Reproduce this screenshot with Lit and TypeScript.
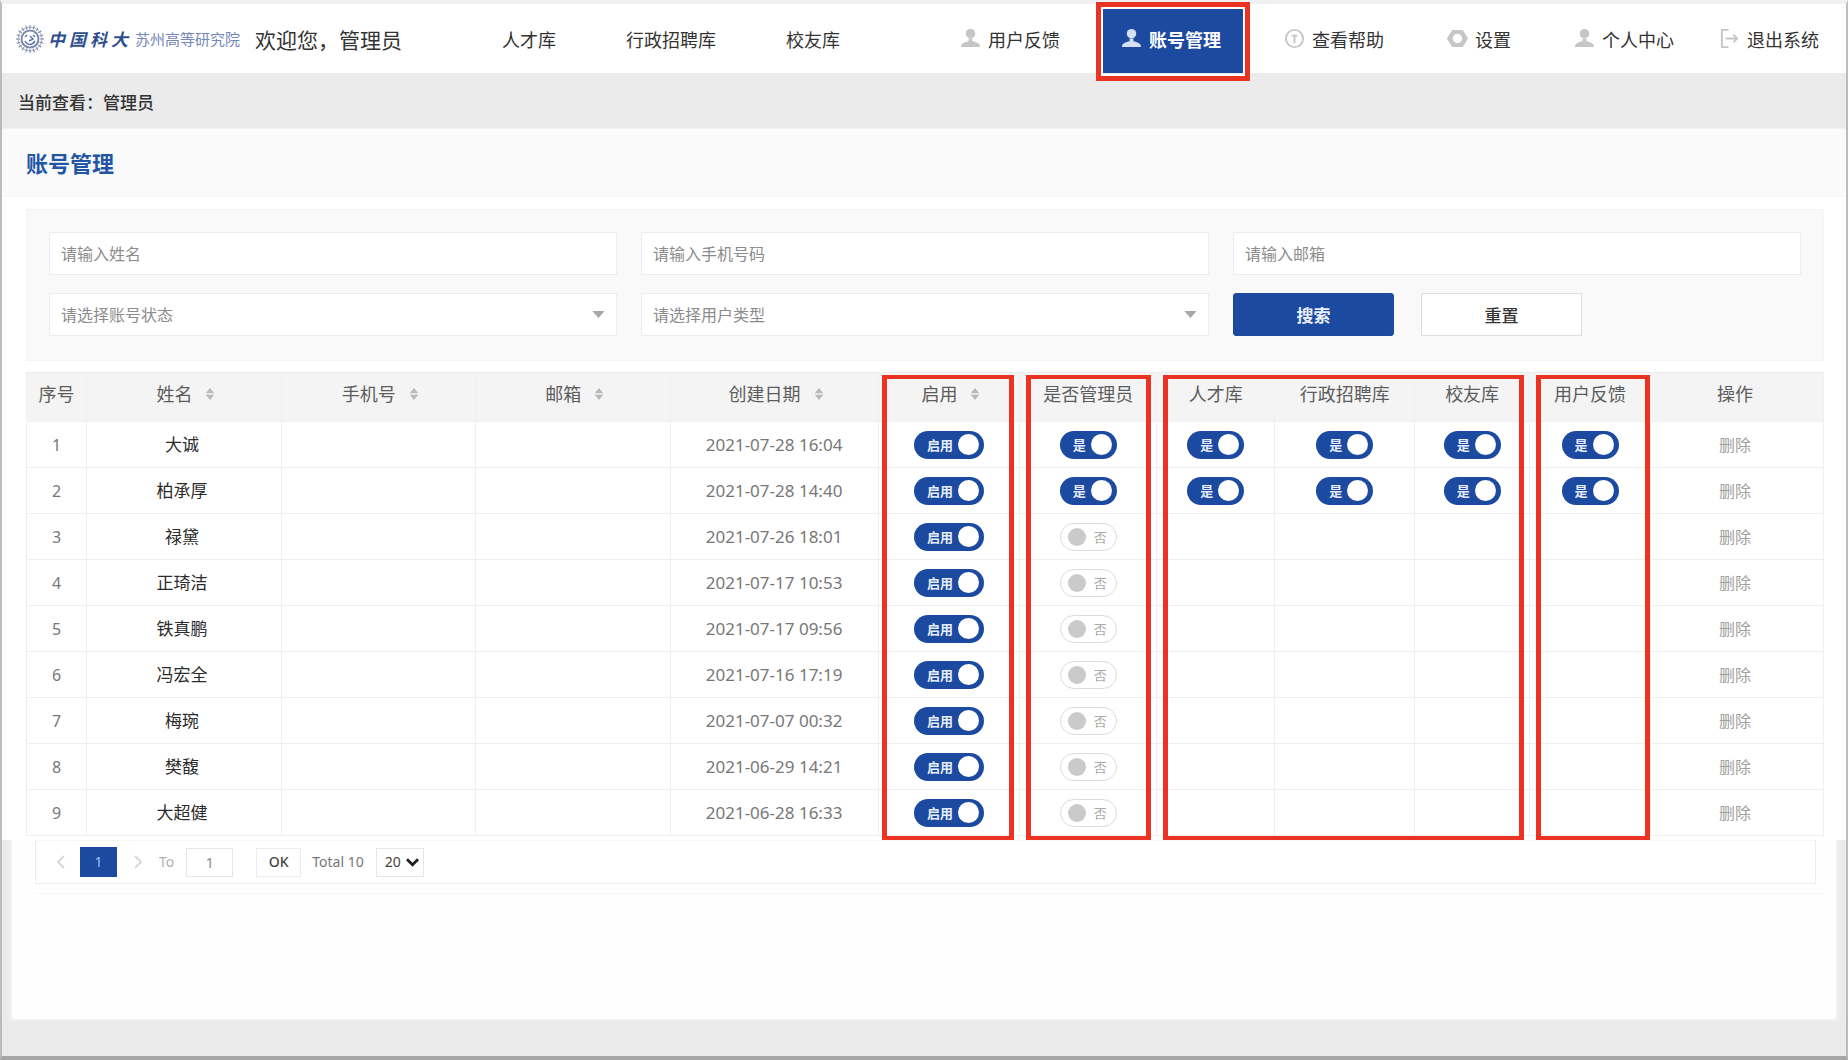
import { LitElement, html, css, svg } from "lit";
import { customElement, property } from "lit/decorators.js";
import { classMap } from "lit/directives/class-map.js";

type IconName = "user" | "help" | "gear" | "exit";

const ICONS = {
  user: svg`<circle cx="11" cy="6" r="5" /><path d="M1 20c0-4 4-5 8-6v-3h4v3c4 1 8 2 8 6z" />`,
  help: svg`<circle cx="11" cy="11" r="9" fill="none" stroke="currentColor" stroke-width="2" />
    <path d="M8 8h6M11 8v8" fill="none" stroke="currentColor" stroke-width="2" />`,
  gear: svg`<path d="M6 3h10l5 8-5 8H6l-5-8z" fill="none" stroke="currentColor" stroke-width="2" />
    <circle cx="11" cy="11" r="7" fill="none" stroke="currentColor" stroke-width="4" />`,
  exit: svg`<path d="M10 2H3v18h7M7 11h12M15 7l4 4-4 4" fill="none" stroke="currentColor" stroke-width="2" />`,
};

interface NavItem {
  label: string;
  icon: IconName;
  active?: boolean;
}

const LIBRARIES = ["人才库", "行政招聘库", "校友库"];

const TOOLS: NavItem[] = [
  { label: "用户反馈", icon: "user" },
  { label: "账号管理", icon: "user", active: true },
  { label: "查看帮助", icon: "help" },
  { label: "设置", icon: "gear" },
  { label: "个人中心", icon: "user" },
  { label: "退出系统", icon: "exit" },
];

interface Column {
  label: string;
  weight: number;
  sortable?: boolean;
}

const COLUMNS: Column[] = [
  { label: "序号", weight: 60 },
  { label: "姓名", weight: 195, sortable: true },
  { label: "手机号", weight: 194, sortable: true },
  { label: "邮箱", weight: 195, sortable: true },
  { label: "创建日期", weight: 208, sortable: true },
  { label: "启用", weight: 142, sortable: true },
  { label: "是否管理员", weight: 137 },
  { label: "人才库", weight: 118 },
  { label: "行政招聘库", weight: 140 },
  { label: "校友库", weight: 115 },
  { label: "用户反馈", weight: 121 },
  { label: "操作", weight: 173 },
];

const TOTAL_WEIGHT = COLUMNS.reduce((sum, c) => sum + c.weight, 0);

interface Account {
  name: string;
  created: string;
  admin: boolean;
}

const ACCOUNTS: Account[] = [
  { name: "大诚", created: "2021-07-28 16:04", admin: true },
  { name: "柏承厚", created: "2021-07-28 14:40", admin: true },
  { name: "禄黛", created: "2021-07-26 18:01", admin: false },
  { name: "正琦洁", created: "2021-07-17 10:53", admin: false },
  { name: "铁真鹏", created: "2021-07-17 09:56", admin: false },
  { name: "冯宏全", created: "2021-07-16 17:19", admin: false },
  { name: "梅琬", created: "2021-07-07 00:32", admin: false },
  { name: "樊馥", created: "2021-06-29 14:21", admin: false },
  { name: "大超健", created: "2021-06-28 16:33", admin: false },
];

@customElement("toggle-switch")
export class ToggleSwitch extends LitElement {
  @property({ type: Boolean }) checked = false;
  @property() on = "是";
  @property() off = "否";
  @property() name = "";

  static styles = css`
    :host {
      display: inline-flex;
      vertical-align: middle;
    }
    .track {
      display: flex;
      align-items: center;
      gap: 5px;
      box-sizing: border-box;
      height: 28px;
      padding: 0 5px 0 13px;
      border-radius: 14px;
      background: #1c4aa0;
      color: #e6edfa;
      font-size: 13px;
      line-height: 20px;
      font-weight: 700;
      cursor: pointer;
    }
    .box {
      appearance: none;
      order: 1;
      width: 21px;
      height: 21px;
      margin: 0;
      border-radius: 50%;
      background: #fff;
      cursor: pointer;
    }
    .track.off {
      gap: 8px;
      padding: 0 9px 0 7px;
      border: 1px solid #dcdcdc;
      background: #fff;
      color: #aaa;
      font-weight: 400;
    }
    .off .box {
      order: -1;
      width: 18px;
      height: 18px;
      background: #cacaca;
    }
  `;

  private toggle(e: Event) {
    this.checked = (e.target as HTMLInputElement).checked;
  }

  render() {
    return html`<label class=${classMap({ track: true, off: !this.checked })}>
      <span>${this.checked ? this.on : this.off}</span>
      <input class="box" type="checkbox" role="switch" aria-label=${this.name}
        .checked=${this.checked} @change=${this.toggle} />
    </label>`;
  }
}

@customElement("app-root")
export class AppRoot extends LitElement {
  static styles = css`
    :host {
      display: block;
      font-family: "Noto Sans", "Noto Sans CJK SC", sans-serif;
      color: #333;
    }
    * {
      box-sizing: border-box;
    }
    button,
    input,
    select {
      font: inherit;
      color: inherit;
      margin: 0;
    }
    button {
      padding: 0;
      border: 0;
      background: none;
      cursor: pointer;
    }
    a {
      color: inherit;
      text-decoration: none;
    }
    .page {
      display: flex;
      flex-direction: column;
      min-height: 100vh;
      border: 2px solid #bcbcbc;
      border-top: 4px solid #f0f0f0;
      border-bottom: 4px solid #a6a6a6;
      background: #eaeaea;
    }

    .header {
      display: flex;
      align-items: stretch;
      height: 69px;
      padding: 0 7px 0 14px;
      background: #fff;
      font-size: 18px;
      white-space: nowrap;
    }
    .brand,
    .libraries {
      display: flex;
      align-items: center;
    }
    .seal {
      width: 28px;
      height: 28px;
      margin-right: 4px;
    }
    .script {
      display: flex;
      gap: 4px;
      margin-right: 7px;
      color: #2f4f8f;
      font-size: 17px;
      font-weight: 700;
      font-style: italic;
    }
    .institute {
      color: #7488b8;
      font-size: 15px;
    }
    .welcome {
      margin-left: 15px;
      font-size: 21px;
    }
    .libraries {
      gap: 70px;
      margin-left: 100px;
    }
    .tools {
      display: flex;
      gap: 23px;
      margin-left: auto;
    }
    .tool {
      position: relative;
      display: flex;
      align-items: center;
      gap: 7px;
      padding: 0 20px;
    }
    .tool:last-child {
      padding-left: 2px;
    }
    .tool svg {
      width: 21px;
      height: 21px;
      color: #c6c6c6;
      fill: currentColor;
    }
    .tool.active {
      margin-right: -2px;
      padding: 0 22px 0 18px;
      background: #1c4aa0;
      color: #fff;
      font-weight: 700;
    }
    .tool.active svg {
      color: #d5e0f5;
    }
    .tool.active::after {
      content: "";
      position: absolute;
      inset: -2px -7px -8px;
      border: 5px solid #ea3323;
      box-shadow: inset 0 0 0 2px #fff;
      pointer-events: none;
    }

    .viewing {
      padding: 17px 16px 13px;
      border-bottom: 1px solid #f1f1f1;
      background: #ebebeb;
      font-size: 17px;
      line-height: 25px;
      font-weight: 500;
    }
    .title {
      margin: 0;
      padding: 18px 24px 17px;
      border-bottom: 1px solid #f4f4f4;
      background: #fafafa;
      color: #2355a5;
      font-size: 22px;
      line-height: 32px;
      font-weight: 700;
    }

    .content {
      padding: 12px 22px 4px 24px;
      background: #fff;
    }
    .filters {
      display: grid;
      grid-template-columns: repeat(3, 1fr);
      gap: 18px 24px;
      padding: 22px 22px 24px;
      border: 1px solid #f5f5f5;
      background: #f9f9f9;
      font-size: 16px;
    }
    .field {
      display: block;
      width: 100%;
      height: 43px;
      padding: 0 11px;
      border: 1px solid #ededed;
      border-radius: 0;
      background: #fff;
      color: #8c8c8c;
      outline: 0;
    }
    .field::placeholder {
      color: #8c8c8c;
    }
    .dropdown {
      position: relative;
    }
    .dropdown .field {
      appearance: none;
    }
    .caret {
      position: absolute;
      top: 18px;
      right: 12px;
      width: 13px;
      height: 7px;
      fill: #a8a8a8;
      pointer-events: none;
    }
    .actions {
      display: flex;
      gap: 27px;
    }
    .action {
      width: 161px;
      height: 43px;
      border: 1px solid #dedede;
      background: #fff;
      font-size: 17px;
      font-weight: 500;
    }
    .action.primary {
      border-color: #1c4aa0;
      border-radius: 3px;
      background: #1c4aa0;
      color: #e8effb;
      font-weight: 700;
    }

    .sheet {
      position: relative;
      margin-top: 11px;
    }
    .grid {
      width: 100%;
      table-layout: fixed;
      border-collapse: collapse;
      text-align: center;
    }
    .grid th,
    .grid td {
      padding: 0;
      border: 1px solid #efefef;
    }
    .grid th {
      height: 49px;
      padding-bottom: 6px;
      border-color: #ececec #f0f0f0 #f0f0f0;
      background: #f4f4f4;
      color: #5c5c5c;
      font-size: 18px;
      line-height: 24px;
      font-weight: 400;
    }
    .grid td {
      height: 46px;
      color: #777;
      font-size: 16px;
      line-height: 24px;
    }
    .grid td.name {
      padding-right: 4px;
      color: #2b2b2b;
      font-size: 17px;
    }
    .grid td.date {
      font-size: 17px;
    }
    .grid th:last-child,
    .grid td:last-child {
      padding-right: 4px;
    }
    .sort {
      display: inline-flex;
      align-items: center;
      gap: 13px;
      padding-left: 4px;
    }
    .sort svg {
      width: 10px;
      height: 12px;
      fill: #b9b9b9;
    }
    .remove {
      color: #a0a0a0;
    }
    .marks {
      position: absolute;
      z-index: 1;
      inset: 3px 0 -4px;
      display: grid;
      pointer-events: none;
    }
    .mark {
      margin: 0 6px;
      border: solid #ea3323;
      border-width: 4px 5px;
    }
    .mark:first-child {
      margin-left: 4px;
    }
    .mark:last-child {
      margin-right: 1px;
    }

    .lower {
      flex: 1;
      display: flex;
      padding: 0 10px 37px;
    }
    .panel {
      flex: 1;
      padding: 0 20px 0 23px;
      background: #fefefe;
      box-shadow: 0 0 4px 2px #f3f3f3;
      clip-path: inset(0 -8px -8px);
    }
    .pager {
      display: flex;
      align-items: center;
      height: 44px;
      padding-left: 20px;
      border: 1px solid #ececec;
      border-top-color: #f6f6f6;
      background: #fff;
      color: #777;
      font-size: 14px;
      line-height: 20px;
    }
    .step {
      width: 9px;
      height: 14px;
    }
    .step svg {
      display: block;
      width: 9px;
      height: 14px;
      fill: none;
      stroke: #d8d8d8;
      stroke-width: 2;
    }
    .current {
      width: 37px;
      height: 30px;
      margin: 0 17px 0 15px;
      background: #1c4aa0;
      color: #9fc0f0;
    }
    .jump {
      display: flex;
      align-items: center;
      gap: 12px;
      margin: 0 23px 0 16px;
      color: #b0b0b0;
    }
    .number {
      width: 47px;
      height: 29px;
      padding: 0;
      border: 1px solid #e6e6e6;
      color: #888;
      text-align: center;
    }
    .ok {
      width: 45px;
      height: 29px;
      margin-right: 11px;
      border: 1px solid #ececec;
      color: #444;
      font-weight: 500;
    }
    .size {
      position: relative;
      margin-left: 12px;
    }
    .size select {
      appearance: none;
      display: block;
      width: 48px;
      height: 29px;
      padding: 0 0 0 8px;
      border: 1px solid #e6e6e6;
      border-radius: 0;
      background: #fff;
      color: #444;
    }
    .size svg {
      position: absolute;
      top: 10px;
      right: 5px;
      width: 13px;
      height: 9px;
      fill: none;
      stroke: #222;
      stroke-width: 3;
      pointer-events: none;
    }
    .rule {
      height: 10px;
      margin-right: -9px;
      border-bottom: 1px solid #f6f6f6;
    }
  `;

  private header() {
    const ticks = Array.from({ length: 20 }, (_, i) => i * 18);
    return html`<header class="header">
      <div class="brand">
        <svg class="seal" viewBox="0 0 28 28" fill="none" stroke="#7d8aa8" aria-hidden="true">
          <circle cx="14" cy="14" r="12" stroke="#a3adc4" stroke-width="1" />
          ${ticks.map((a) => svg`<path d="M14 0v4" stroke-width="1" transform="rotate(${a} 14 14)" />`)}
          <circle cx="14" cy="14" r="8.5" stroke-width="2" />
          <path d="M9 12l2-2M17 10l2 2M9 16c2 4 7 5 10 0M14 11l3 3-4 2" stroke="#5b78b4" stroke-width="1.5" />
        </svg>
        <span class="script"><span>中</span><span>国</span><span>科</span><span>大</span></span>
        <span class="institute">苏州高等研究院</span>
        <span class="welcome">欢迎您，管理员</span>
      </div>
      <nav class="libraries">${LIBRARIES.map((l) => html`<a href="#">${l}</a>`)}</nav>
      <nav class="tools">
        ${TOOLS.map(
          (t) => html`<a href="#" class=${classMap({ tool: true, active: !!t.active })}>
            <svg viewBox="0 0 22 22" aria-hidden="true">${ICONS[t.icon]}</svg><span>${t.label}</span>
          </a>`,
        )}
      </nav>
    </header>`;
  }

  private dropdown(label: string) {
    return html`<div class="dropdown">
      <select class="field" aria-label=${label}><option>${label}</option></select>
      <svg class="caret" viewBox="0 0 14 8" aria-hidden="true"><path d="M0 0h14L7 8z" /></svg>
    </div>`;
  }

  private filters() {
    return html`<form class="filters" @submit=${(e: Event) => e.preventDefault()}>
      ${["请输入姓名", "请输入手机号码", "请输入邮箱"].map(
        (p) => html`<input class="field" type="text" placeholder=${p} aria-label=${p} />`,
      )}
      ${this.dropdown("请选择账号状态")} ${this.dropdown("请选择用户类型")}
      <div class="actions">
        <button class="action primary" type="submit">搜索</button>
        <button class="action" type="reset">重置</button>
      </div>
    </form>`;
  }

  private toggleCell(label: string, checked: boolean, on = "是", off = "否") {
    return html`<td><toggle-switch name=${label} on=${on} off=${off} ?checked=${checked}></toggle-switch></td>`;
  }

  private row(a: Account, i: number) {
    return html`<tr>
      <td>${i + 1}</td>
      <td class="name">${a.name}</td>
      <td></td>
      <td></td>
      <td class="date">${a.created}</td>
      ${this.toggleCell("启用", true, "启用", "停用")}
      ${this.toggleCell("是否管理员", a.admin)}
      ${["人才库", "行政招聘库", "校友库", "用户反馈"].map((l) =>
        a.admin ? this.toggleCell(l, true) : html`<td></td>`,
      )}
      <td><button class="remove" type="button">删除</button></td>
    </tr>`;
  }

  private table() {
    const tracks = COLUMNS.map((c) => `${c.weight}fr`).join(" ");
    return html`<div class="sheet">
      <table class="grid">
        <colgroup>
          ${COLUMNS.map((c) => html`<col style="width:${(c.weight / TOTAL_WEIGHT) * 100}%" />`)}
        </colgroup>
        <thead>
          <tr>
            ${COLUMNS.map(
              (c) => html`<th scope="col">
                ${c.sortable
                  ? html`<button class="sort" type="button">${c.label}<svg viewBox="0 0 10 14" aria-hidden="true">
                      <path d="M0 6l5-6 5 6zM0 8h10l-5 6z" /></svg></button>`
                  : c.label}
              </th>`,
            )}
          </tr>
        </thead>
        <tbody>${ACCOUNTS.map((a, i) => this.row(a, i))}</tbody>
      </table>
      <div class="marks" style="grid-template-columns:${tracks}">
        ${["6 / 7", "7 / 8", "8 / 11", "11 / 12"].map(
          (span) => html`<div class="mark" style="grid-column:${span}"></div>`,
        )}
      </div>
    </div>`;
  }

  private pager() {
    return html`<div class="pager">
      <button class="step" type="button" aria-label="上一页"><svg viewBox="0 0 9 14"><path d="M8 1L2 7l6 6" /></svg></button>
      <button class="current" type="button">1</button>
      <button class="step" type="button" aria-label="下一页"><svg viewBox="0 0 9 14"><path d="M1 1l6 6-6 6" /></svg></button>
      <label class="jump">To<input class="number" type="text" value="1" /></label>
      <button class="ok" type="button">OK</button>
      <span>Total 10</span>
      <div class="size">
        <select aria-label="每页条数"><option>20</option></select>
        <svg viewBox="0 0 14 9" aria-hidden="true"><path d="M1 1l6 6 6-6" /></svg>
      </div>
    </div>`;
  }

  render() {
    return html`<div class="page">
      ${this.header()}
      <div class="viewing">当前查看：管理员</div>
      <h1 class="title">账号管理</h1>
      <main class="content">${this.filters()} ${this.table()}</main>
      <section class="lower">
        <div class="panel">${this.pager()}<div class="rule"></div></div>
      </section>
    </div>`;
  }
}
